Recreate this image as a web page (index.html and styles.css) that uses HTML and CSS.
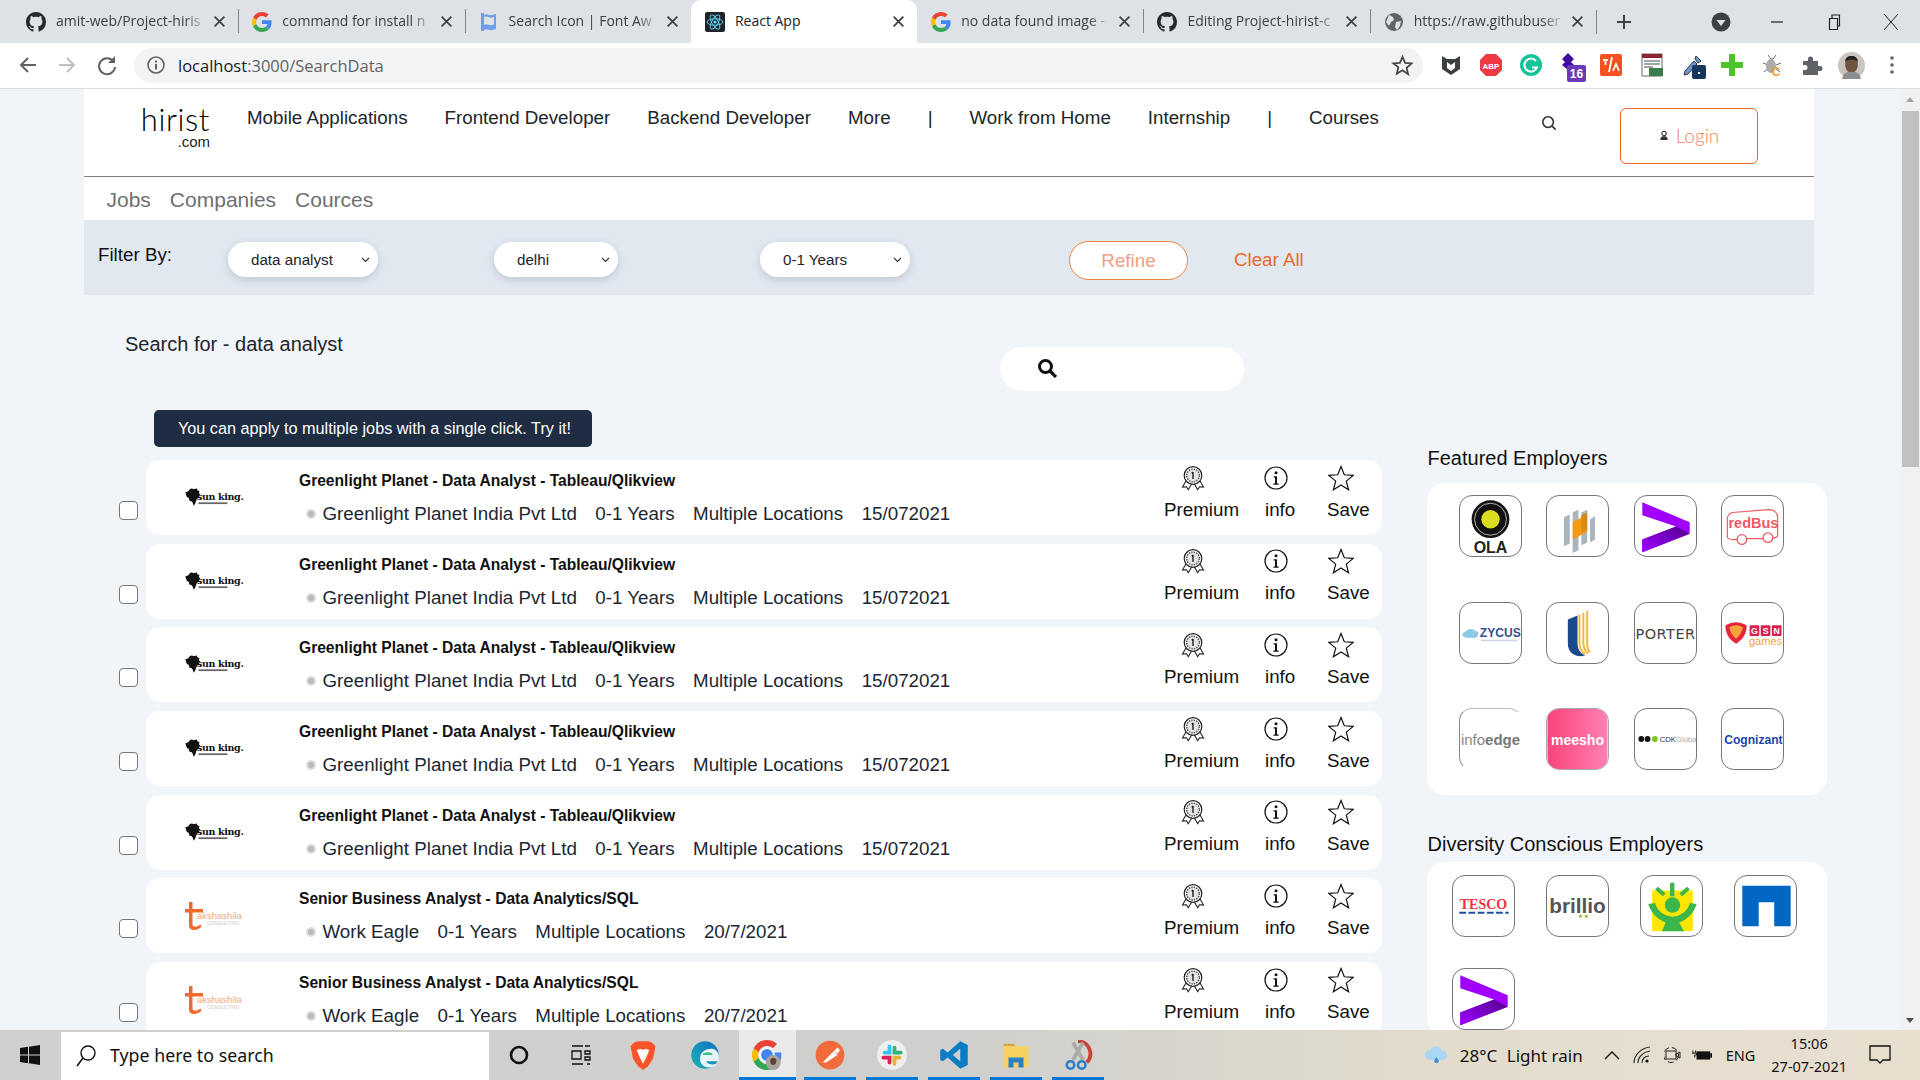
FILE: index.html
```html
<!DOCTYPE html>
<html lang="en">
<head>
<meta charset="utf-8">
<title>React App</title>
<link rel="stylesheet" href="styles.css">
</head>
<body>
<svg class="sprite" xmlns="http://www.w3.org/2000/svg">
  <defs><linearGradient id="accg" x1="0" x2="1" y1="1" y2="0"><stop offset="0" stop-color="#a100ff"/><stop offset="1" stop-color="#50008c"/></linearGradient></defs>
  <symbol id="gh" viewBox="0 0 16 16"><path fill="#24292e" d="M8 0C3.58 0 0 3.58 0 8c0 3.54 2.29 6.53 5.47 7.59.4.07.55-.17.55-.38 0-.19-.01-.82-.01-1.49-2.01.37-2.53-.49-2.69-.94-.09-.23-.48-.94-.82-1.13-.28-.15-.68-.52-.01-.53.63-.01 1.08.58 1.23.82.72 1.21 1.87.87 2.33.66.07-.52.28-.87.51-1.07-1.78-.2-3.64-.89-3.64-3.95 0-.87.31-1.59.82-2.15-.08-.2-.36-1.02.08-2.12 0 0 .67-.21 2.2.82.64-.18 1.32-.27 2-.27.68 0 1.36.09 2 .27 1.53-1.04 2.2-.82 2.2-.82.44 1.1.16 1.92.08 2.12.51.56.82 1.27.82 2.15 0 3.07-1.87 3.75-3.65 3.95.29.25.54.73.54 1.48 0 1.07-.01 1.93-.01 2.2 0 .21.15.46.55.38A8.013 8.013 0 0016 8c0-4.42-3.58-8-8-8z"/></symbol>
  <symbol id="goo" viewBox="0 0 48 48"><path fill="#EA4335" d="M24 9.5c3.54 0 6.71 1.22 9.21 3.6l6.85-6.85C35.9 2.38 30.47 0 24 0 14.62 0 6.51 5.38 2.56 13.22l7.98 6.19C12.43 13.72 17.74 9.5 24 9.5z"/><path fill="#4285F4" d="M46.98 24.55c0-1.57-.15-3.09-.38-4.55H24v9.02h12.94c-.58 2.96-2.26 5.48-4.78 7.18l7.73 6c4.51-4.18 7.09-10.36 7.09-17.65z"/><path fill="#FBBC05" d="M10.53 28.59c-.48-1.45-.76-2.99-.76-4.59s.27-3.14.76-4.59l-7.98-6.19C.92 16.46 0 20.12 0 24c0 3.88.92 7.54 2.56 10.78l7.97-6.19z"/><path fill="#34A853" d="M24 48c6.48 0 11.93-2.13 15.89-5.81l-7.73-6c-2.15 1.45-4.92 2.3-8.16 2.3-6.26 0-11.57-4.22-13.47-9.91l-7.98 6.19C6.51 42.62 14.62 48 24 48z"/></symbol>
  <symbol id="x" viewBox="0 0 12 12"><path d="M1.500 1.500l9 9M10.500 1.500l-9 9" stroke="#3c4043" stroke-width="1.600" fill="none"/></symbol>
  <symbol id="medal" viewBox="0 0 24 24"><path d="M5.500 14L1.500 21l4-.3 1.800 3 3.700-6.500M18.500 14l4 7-4-.3-1.800 3-3.700-6.500" fill="#fff" stroke="#222" stroke-width="1.100"/><circle cx="12" cy="9.500" r="8.800" fill="#fff" stroke="#222" stroke-width="1.200"/><circle cx="12" cy="9.500" r="6.400" fill="#e4e4e4" stroke="#555" stroke-width="1.500" stroke-dasharray="1.500 1"/><path d="M12 6v7M10.700 7.200L12 6" stroke="#111" stroke-width="1.300" fill="none"/></symbol>
  <symbol id="info" viewBox="0 0 24 24"><circle cx="12" cy="12" r="11" fill="none" stroke="#111" stroke-width="1.200"/><circle cx="12" cy="6.700" r="1.500" fill="#111"/><path d="M9.600 10.300h3.400v7.300h1.700v1.100H9.400v-1.100h1.600v-6.200H9.600z" fill="#111"/></symbol>
  <symbol id="star" viewBox="0 0 26 26"><path d="M13 1.500l3.300 8.300 8.900.6-6.900 5.700 2.300 8.700-7.600-4.800-7.600 4.800 2.300-8.700L.8 10.400l8.900-.6z" fill="#fff" stroke="#111" stroke-width="1.200"/></symbol>
  <symbol id="sun" viewBox="0 0 56 20"><path d="M7 0l2 1 3-1 1 2 2 1-.5 2 1.500 1.500-2 1.500.5 2-2 .5-1 2.500-1 3-1.500 2-1-3-1-1.500-2.500-1-.5-2.500-2-1L1 6.500 .5 4 3.500 3 5 1z" fill="#111"/><rect x="14" y="14.500" width="30" height="1.800" fill="#666"/></symbol>
  <symbol id="tak" viewBox="0 0 54 30"><path d="M4 0h3.500v7H18v3.500H7.500V22c0 3 3 4 8 .5l1 2C13 29 4 30 4 23V10.500H0V7h4z" fill="#f26a2a"/></symbol>
  <symbol id="acc" viewBox="0 0 62 62"><path d="M7 6.500L56 27v12L7 58V45l35-13.500L7 20z" fill="#a100ff"/><path d="M7 45l35-13.500L56 39 7 58z" fill="url(#accg)"/></symbol>
</svg>

<header class="strip">
  <div class="tab"><svg class="fav"><use href="#gh"/></svg><span class="tab-t">amit-web/Project-hiris</span><svg class="tab-x"><use href="#x"/></svg></div>
  <div class="tab sep"><svg class="fav"><use href="#goo"/></svg><span class="tab-t">command for install n</span><svg class="tab-x"><use href="#x"/></svg></div>
  <div class="tab sep"><svg class="fav" viewBox="0 0 20 20"><path d="M2 1h3v2c3-2 5 1 8 0l4-1v15l-4 1c-3 1-5-2-8 0v1H2zM5 5v8c3-2 5 1 8 0l2-.5V5l-2 .5c-3 1-5-2-8-.5z" fill="#6f9fe8"/></svg><span class="tab-t">Search Icon | Font Aw</span><svg class="tab-x"><use href="#x"/></svg></div>
  <div class="tab active"><svg class="fav" viewBox="0 0 20 20"><rect width="20" height="20" rx="2" fill="#20232a"/><g fill="none" stroke="#61dafb" stroke-width=".9"><ellipse cx="10" cy="10" rx="8" ry="3.200"/><ellipse cx="10" cy="10" rx="8" ry="3.200" transform="rotate(60 10 10)"/><ellipse cx="10" cy="10" rx="8" ry="3.200" transform="rotate(120 10 10)"/></g><circle cx="10" cy="10" r="1.600" fill="#61dafb"/></svg><span class="tab-t nofade">React App</span><svg class="tab-x"><use href="#x"/></svg></div>
  <div class="tab"><svg class="fav"><use href="#goo"/></svg><span class="tab-t">no data found image -</span><svg class="tab-x"><use href="#x"/></svg></div>
  <div class="tab sep"><svg class="fav"><use href="#gh"/></svg><span class="tab-t">Editing Project-hirist-c</span><svg class="tab-x"><use href="#x"/></svg></div>
  <div class="tab sep"><svg class="fav" viewBox="0 0 20 20"><circle cx="10" cy="10" r="9" fill="#5f6368"/><path d="M5 3l4 2 1 3-3 2-2 4-3-4zM12 10l5-1-1 5-3 4-2-3z" fill="#dee1e6"/></svg><span class="tab-t">https://raw.githubuser</span><svg class="tab-x"><use href="#x"/></svg></div>
  <div class="plus-sep"></div>
  <svg class="plus" viewBox="0 0 24 24"><path d="M12 5v14M5 12h14" stroke="#3c4043" stroke-width="2"/></svg>
  <svg class="prof" viewBox="0 0 24 24"><circle cx="12" cy="12" r="9.500" fill="#3c4043"/><path d="M7.500 10h9L12 16z" fill="#dee1e6"/></svg>
  <svg class="win win-min" viewBox="0 0 24 24"><path d="M6 12h12" stroke="#222" stroke-width="1.200"/></svg>
  <svg class="win" viewBox="0 0 24 24"><path d="M7.500 8.500h8v11h-8zM10 8.500V5h7.500v11h-2" fill="none" stroke="#222" stroke-width="1.200"/></svg>
  <svg class="win" viewBox="0 0 24 24"><path d="M5 4l14 16M19 4L5 20" stroke="#222" stroke-width="1"/></svg>
</header>

<nav class="toolbar">
  <svg class="tbtn" viewBox="0 0 24 24"><path d="M20 12H5M12 5l-7 7 7 7" fill="none" stroke="#5f6368" stroke-width="2"/></svg>
  <svg class="tbtn" viewBox="0 0 24 24"><path d="M4 12h15M12 5l7 7-7 7" fill="none" stroke="#bdc1c6" stroke-width="2"/></svg>
  <svg class="tbtn" viewBox="0 0 24 24"><path d="M18.500 8.500A8 8 0 1 0 20 14" fill="none" stroke="#5f6368" stroke-width="2"/><path d="M20 3v7h-7z" fill="#5f6368"/></svg>
  <div class="pill">
    <svg class="site" viewBox="0 0 20 20"><circle cx="10" cy="10" r="8" fill="none" stroke="#5f6368" stroke-width="1.600"/><path d="M9 9h2v5.500H9zM9 5.500h2v2H9z" fill="#5f6368"/></svg>
    <span class="url"><b>localhost</b>:3000/SearchData</span>
    <svg class="bm" viewBox="0 0 24 24"><path d="M12 3l2.700 6.300 6.800.6-5.200 4.500 1.600 6.700L12 17l-5.900 3.600 1.600-6.700L2.500 9.900l6.800-.6z" fill="none" stroke="#444" stroke-width="1.800"/></svg>
  </div>
  <div class="exts">
    <div class="ext"><svg viewBox="0 0 24 24"><path d="M3 3l5 3h8l5-3v13l-9 6-9-6z" fill="#3b3f42"/><path d="M8 9l4 3 4-3v6l-4 3-4-3z" fill="#fff"/></svg></div>
    <div class="ext"><svg viewBox="0 0 24 24"><path d="M7 1h10l6 6v10l-6 6H7l-6-6V7z" fill="#ee3a43"/><text x="12" y="15.500" class="abp">ABP</text></svg></div>
    <div class="ext"><svg viewBox="0 0 24 24"><circle cx="12" cy="12" r="11" fill="#15c39a"/><path d="M17 8a6.500 6.500 0 1 0 1 6.500h-5" fill="none" stroke="#fff" stroke-width="2"/></svg></div>
    <div class="ext"><svg viewBox="0 0 24 24"><path d="M9 0l6 6-3 3 3 3-6 5-6-5 3-3-3-3z" fill="#3f0a9e"/><rect x="8" y="12" width="19" height="17" rx="2" fill="#6b39b8"/><text x="17.500" y="25" class="badge">16</text></svg></div>
    <div class="ext"><svg viewBox="0 0 24 24"><rect x="1" y="1" width="22" height="22" rx="2" fill="#f4511e"/><path d="M4 7h5M6.500 7v5M13 4l-3 15M14 18l3-7 3 7" stroke="#fff" stroke-width="1.800" fill="none"/></svg></div>
    <div class="ext"><svg viewBox="0 0 24 24"><rect x="2" y="1" width="20" height="22" fill="#fff" stroke="#666"/><rect x="2" y="1" width="20" height="4" fill="#8a2432"/><path d="M4 8h16M4 11h16M4 14h9" stroke="#888" stroke-width="1.500"/><rect x="9" y="15" width="14" height="8" fill="#3b7d4f"/></svg></div>
    <div class="ext"><svg viewBox="0 0 24 24"><path d="M16 3l5 5-3 2-3-4zM14 8l3 3-9 10-4 1 1-4z" fill="#6a97d6" stroke="#333"/><rect x="12" y="12" width="14" height="14" rx="2" fill="#16365c"/><rect x="18" y="19" width="2" height="2" fill="#fff"/></svg></div>
    <div class="ext"><svg viewBox="0 0 24 24"><path d="M9 1h6v8h8v6h-8v8H9v-8H1V9h8z" fill="#4ec42c"/></svg></div>
    <div class="ext"><svg viewBox="0 0 24 24"><path d="M8 2l3 4h2l3-4M3 10l5 2M21 10l-5 2M4 19l4-3M20 19l-4-3" stroke="#666" fill="none"/><ellipse cx="11" cy="13" rx="5" ry="7" fill="#aaa"/><text x="16" y="23" class="bug">C</text></svg></div>
    <div class="ext"><svg viewBox="0 0 24 24"><path d="M3 8h5V6a2.500 2.500 0 0 1 5 0v2h5v5h2a2.500 2.500 0 0 1 0 5h-2v4H3v-5h2a2.500 2.500 0 0 0 0-5H3z" fill="#5f6368"/></svg></div>
    <div class="ext ava"><svg viewBox="0 0 26 26"><circle cx="13" cy="13" r="13" fill="#c9c4bd"/><path d="M7 9c0-7 12-7 12 0v5c-1 4-3 6-6 6s-5-2-6-6z" fill="#6f5140"/><path d="M7 9c0-7 12-7 12 0l-2-1c-3-1-6-1-8 0z" fill="#222"/><path d="M4 26c1-6 4-7 9-7s8 1 9 7z" fill="#8b8f93"/></svg></div>
    <div class="ext"><svg viewBox="0 0 24 24"><circle cx="12" cy="5" r="1.800" fill="#5f6368"/><circle cx="12" cy="12" r="1.800" fill="#5f6368"/><circle cx="12" cy="19" r="1.800" fill="#5f6368"/></svg></div>
  </div>
</nav>

<div class="viewport">
  <main class="page">
    <section class="head">
      <div class="logo"><span class="logo-main">hirist</span><span class="logo-sub">.com</span></div>
      <div class="menu">
        <a>Mobile Applications</a><a>Frontend Developer</a><a>Backend Developer</a><a>More</a><a>|</a><a>Work from Home</a><a>Internship</a><a>|</a><a>Courses</a>
      </div>
      <svg class="head-search" viewBox="0 0 18 18"><circle cx="8" cy="8" r="6" fill="none" stroke="#333" stroke-width="1.800"/><path d="M12.500 12.500l4 4" stroke="#333" stroke-width="1.800"/></svg>
      <button class="login"><svg viewBox="0 0 12 12"><circle cx="6" cy="3.500" r="2.600" fill="#fff" stroke="#333" stroke-width="1.300"/><path d="M1.500 11.500c.5-4 2-4.500 4.500-4.500s4 .5 4.500 4.500z" fill="#333"/></svg>Login</button>
    </section>
    <section class="subnav"><a>Jobs</a><a>Companies</a><a>Cources</a></section>
    <section class="filter">
      <span class="filter-l">Filter By:</span>
      <select class="sel sel-a"><option>data analyst</option></select>
      <select class="sel sel-b"><option>delhi</option></select>
      <select class="sel sel-c"><option>0-1 Years</option></select>
      <button class="refine">Refine</button>
      <a class="clear">Clear All</a>
    </section>
    <div class="body">
      <div class="left">
        <div class="searchline">
          <span class="search-for">Search for - data analyst</span>
          <div class="searchbox"><svg viewBox="0 0 20 20"><circle cx="8.500" cy="8.500" r="6" fill="none" stroke="#111" stroke-width="3"/><path d="M13 13l6 6" stroke="#111" stroke-width="3.200"/></svg></div>
        </div>
        <div class="hint">You can apply to multiple jobs with a single click. Try it!</div>

        <div class="item"><input type="checkbox" class="chk"><article class="job">
          <svg class="clogo" viewBox="0 0 54 19.300"><use href="#sun"/><text x="12" y="12" class="sun-name">sun king.</text></svg>
          <div class="jtext"><h3>Greenlight Planet - Data Analyst - Tableau/Qlikview</h3><p><i class="dot"></i><span>Greenlight Planet India Pvt Ltd</span><span>0-1 Years</span><span>Multiple Locations</span><span>15/072021</span></p></div>
          <div class="acts"><div class="act a1"><svg><use href="#medal"/></svg><span>Premium</span></div><div class="act a2"><svg><use href="#info"/></svg><span>info</span></div><div class="act a3"><svg><use href="#star"/></svg><span>Save</span></div></div>
        </article></div>
        <div class="item"><input type="checkbox" class="chk"><article class="job">
          <svg class="clogo" viewBox="0 0 54 19.300"><use href="#sun"/><text x="12" y="12" class="sun-name">sun king.</text></svg>
          <div class="jtext"><h3>Greenlight Planet - Data Analyst - Tableau/Qlikview</h3><p><i class="dot"></i><span>Greenlight Planet India Pvt Ltd</span><span>0-1 Years</span><span>Multiple Locations</span><span>15/072021</span></p></div>
          <div class="acts"><div class="act a1"><svg><use href="#medal"/></svg><span>Premium</span></div><div class="act a2"><svg><use href="#info"/></svg><span>info</span></div><div class="act a3"><svg><use href="#star"/></svg><span>Save</span></div></div>
        </article></div>
        <div class="item"><input type="checkbox" class="chk"><article class="job">
          <svg class="clogo" viewBox="0 0 54 19.300"><use href="#sun"/><text x="12" y="12" class="sun-name">sun king.</text></svg>
          <div class="jtext"><h3>Greenlight Planet - Data Analyst - Tableau/Qlikview</h3><p><i class="dot"></i><span>Greenlight Planet India Pvt Ltd</span><span>0-1 Years</span><span>Multiple Locations</span><span>15/072021</span></p></div>
          <div class="acts"><div class="act a1"><svg><use href="#medal"/></svg><span>Premium</span></div><div class="act a2"><svg><use href="#info"/></svg><span>info</span></div><div class="act a3"><svg><use href="#star"/></svg><span>Save</span></div></div>
        </article></div>
        <div class="item"><input type="checkbox" class="chk"><article class="job">
          <svg class="clogo" viewBox="0 0 54 19.300"><use href="#sun"/><text x="12" y="12" class="sun-name">sun king.</text></svg>
          <div class="jtext"><h3>Greenlight Planet - Data Analyst - Tableau/Qlikview</h3><p><i class="dot"></i><span>Greenlight Planet India Pvt Ltd</span><span>0-1 Years</span><span>Multiple Locations</span><span>15/072021</span></p></div>
          <div class="acts"><div class="act a1"><svg><use href="#medal"/></svg><span>Premium</span></div><div class="act a2"><svg><use href="#info"/></svg><span>info</span></div><div class="act a3"><svg><use href="#star"/></svg><span>Save</span></div></div>
        </article></div>
        <div class="item"><input type="checkbox" class="chk"><article class="job">
          <svg class="clogo" viewBox="0 0 54 19.300"><use href="#sun"/><text x="12" y="12" class="sun-name">sun king.</text></svg>
          <div class="jtext"><h3>Greenlight Planet - Data Analyst - Tableau/Qlikview</h3><p><i class="dot"></i><span>Greenlight Planet India Pvt Ltd</span><span>0-1 Years</span><span>Multiple Locations</span><span>15/072021</span></p></div>
          <div class="acts"><div class="act a1"><svg><use href="#medal"/></svg><span>Premium</span></div><div class="act a2"><svg><use href="#info"/></svg><span>info</span></div><div class="act a3"><svg><use href="#star"/></svg><span>Save</span></div></div>
        </article></div>
        <div class="item"><input type="checkbox" class="chk"><article class="job">
          <svg class="clogo tk" viewBox="0 0 54 30"><use href="#tak"/><text x="12" y="17" class="tak-name">akshashila</text><text x="22" y="23" class="tak-sub">CONSULTING</text></svg>
          <div class="jtext"><h3>Senior Business Analyst - Data Analytics/SQL</h3><p><i class="dot"></i><span>Work Eagle</span><span>0-1 Years</span><span>Multiple Locations</span><span>20/7/2021</span></p></div>
          <div class="acts"><div class="act a1"><svg><use href="#medal"/></svg><span>Premium</span></div><div class="act a2"><svg><use href="#info"/></svg><span>info</span></div><div class="act a3"><svg><use href="#star"/></svg><span>Save</span></div></div>
        </article></div>
        <div class="item"><input type="checkbox" class="chk"><article class="job">
          <svg class="clogo tk" viewBox="0 0 54 30"><use href="#tak"/><text x="12" y="17" class="tak-name">akshashila</text><text x="22" y="23" class="tak-sub">CONSULTING</text></svg>
          <div class="jtext"><h3>Senior Business Analyst - Data Analytics/SQL</h3><p><i class="dot"></i><span>Work Eagle</span><span>0-1 Years</span><span>Multiple Locations</span><span>20/7/2021</span></p></div>
          <div class="acts"><div class="act a1"><svg><use href="#medal"/></svg><span>Premium</span></div><div class="act a2"><svg><use href="#info"/></svg><span>info</span></div><div class="act a3"><svg><use href="#star"/></svg><span>Save</span></div></div>
        </article></div>
      </div>

      <aside class="right">
        <h2>Featured Employers</h2>
        <div class="card feat">
          <div class="emp"><svg viewBox="0 0 62 62"><circle cx="31" cy="24" r="19.500" fill="#111"/><circle cx="31" cy="24" r="16.500" fill="none" stroke="#fff" stroke-width=".7"/><circle cx="31" cy="24" r="9.500" fill="#d9dd1f"/><text x="31" y="58.500" class="t-ola">OLA</text></svg></div>
          <div class="emp"><svg viewBox="0 0 62 62"><path d="M17 22l6-3v30l-6 3zM26 17l6-3v42l-6 3zM35 17l6-3v34l-6 3zM44 24l5-3v24l-5 3z" fill="#aab4bb"/><path d="M26 27l15-8v18l-15 8z" fill="#f39a12"/><path d="M35 20l6-3v18l-6 3z" fill="#d98812"/></svg></div>
          <div class="emp"><svg><use href="#acc"/></svg></div>
          <div class="emp"><svg viewBox="0 0 62 62"><path d="M5 42V24c0-4 2-6 5-7l38-3c5 0 9 3 9 8v18c0 2-1 3-3 3l-8 1H21l-10 1c-4 0-6-1-6-3z" fill="#fff" stroke="#ef5a62" stroke-width="1.200"/><circle cx="20" cy="45" r="5" fill="#fff" stroke="#ef5a62" stroke-width="1.300"/><circle cx="47" cy="43" r="5" fill="#fff" stroke="#ef5a62" stroke-width="1.300"/><text x="32" y="33" class="t-red">redBus</text></svg></div>

          <div class="emp"><svg viewBox="0 0 62 62"><path d="M2 32c2-3 4-2 5-4 3-2 7-1 8 1 3 0 4 2 3 4 0 2-2 3-4 3H7c-3 0-5-2-5-4z" fill="#8cc9e6"/><text x="20" y="35" class="t-zy">ZYCUS</text><rect x="21" y="38" width="38" height="1.500" fill="#c8d3e6"/></svg></div>
          <div class="emp"><svg viewBox="0 0 62 62"><path d="M21 17l10-4v28c0 7 3 11 8 13-7 3-18-1-18-12z" fill="#1b4a8a"/><path d="M33 12v29c0 7 3 10 6 12M37 10v30c0 7 2 10 5 12M41 8v33c0 6 1 8 3 10" fill="none" stroke="#f2b83a" stroke-width="2"/></svg></div>
          <div class="emp"><svg viewBox="0 0 62 62"><text x="31" y="37" class="t-po">PORTER</text></svg></div>
          <div class="emp"><svg viewBox="0 0 62 62"><path d="M3 23c4-2 8-3 11-3s7 1 11 3c0 9-4 15-11 19C7 38 3 32 3 23z" fill="#e5263a"/><path d="M7 25c2-1 5-2 7-2s5 1 7 2c-1 6-4 9-7 12-3-3-6-6-7-12z" fill="#f8a23c"/><rect x="28" y="23" width="10" height="11" rx="1" fill="#d91f4f"/><rect x="39.500" y="23" width="10" height="11" rx="1" fill="#d91f4f"/><rect x="51" y="23" width="10" height="11" rx="1" fill="#d91f4f"/><text x="33" y="32" class="t-gs">G</text><text x="44.500" y="32" class="t-gs">S</text><text x="56" y="32" class="t-gs">N</text><text x="44.500" y="43" class="t-gm">games</text></svg></div>

          <div class="emp soft"><svg viewBox="0 0 62 62"><text x="31" y="37" class="t-in">info<tspan class="t-in-b">edge</tspan></text></svg></div>
          <div class="emp pink"><svg viewBox="0 0 62 62"><defs><linearGradient id="ms"><stop offset="0" stop-color="#f9447b"/><stop offset="1" stop-color="#ff80b5"/></linearGradient></defs><rect width="62" height="62" fill="url(#ms)"/><text x="31" y="37" class="t-me">meesho</text></svg></div>
          <div class="emp"><svg viewBox="0 0 62 62"><circle cx="6" cy="31" r="3" fill="#111"/><circle cx="12.500" cy="31" r="3" fill="#111"/><circle cx="20" cy="31" r="3" fill="#7ec41f"/><text x="25" y="34" class="t-cd">CDK<tspan fill="#aaa">Global</tspan></text></svg></div>
          <div class="emp"><svg viewBox="0 0 62 62"><text x="32" y="36" class="t-co">Cognizant</text></svg></div>
        </div>
        <h2 class="h-div">Diversity Conscious Employers</h2>
        <div class="card div">
          <div class="emp"><svg viewBox="0 0 62 62"><text x="31" y="34" class="t-te">TESCO</text><path d="M6 38h51" stroke="#1c4fa0" stroke-width="2" stroke-dasharray="7 2.500"/></svg></div>
          <div class="emp"><svg viewBox="0 0 62 62"><text x="31" y="38" class="t-br">brillio</text><circle cx="34" cy="41.500" r="1.700" fill="#9bc53d"/><circle cx="40" cy="41.500" r="1.700" fill="#9bc53d"/></svg></div>
          <div class="emp"><svg viewBox="0 0 62 62"><rect x="11" y="15" width="42" height="42" fill="#ffe600"/><g fill="#3cb54a"><circle cx="32" cy="30" r="8"/><rect x="29.500" y="7" width="4.500" height="14"/><path d="M14 14l3-3 8 7-3 3zM50 14l-3-3-8 7 3 3z"/><path d="M7 29l7-1c2 8 10 14 18 14s16-6 18-14l7 1c-3 10-11 17-18 19l5 9H21l4-9C18 46 10 39 7 29z"/></g></svg></div>
          <div class="emp"><svg viewBox="0 0 62 62"><path d="M7 10h50v42H40V27H24v25H7z" fill="#0067c5"/></svg></div>
          <div class="emp"><svg><use href="#acc"/></svg></div>
        </div>
      </aside>
    </div>
  </main>
  <div class="scroll"><i class="up"></i><div class="thumb"></div><i class="down"></i></div>
</div>

<footer class="task">
  <svg class="start" viewBox="0 0 20 20"><path d="M0 3l8-1.200V9.500H0zM9 1.700L20 0v9.500H9zM0 10.500h8v7.700L0 17zM9 10.500h11V20L9 18.300z" fill="#111"/></svg>
  <div class="tsearch"><svg viewBox="0 0 24 24"><circle cx="14" cy="9" r="7" fill="none" stroke="#111" stroke-width="1.400"/><path d="M9 14l-6 8" stroke="#111" stroke-width="1.600"/></svg><span>Type here to search</span></div>
  <div class="apps">
    <div class="app plain"><svg viewBox="0 0 24 24"><circle cx="12" cy="12" r="8" fill="none" stroke="#111" stroke-width="2.600"/></svg></div>
    <div class="app plain"><svg viewBox="0 0 24 24"><path d="M3 3h11M3 21h11M3 8h9v8H3zM16 3h5M16 8h5v3h-5zM16 14h5v3h-5zM18 21h3" fill="none" stroke="#111" stroke-width="1.300"/></svg></div>
    <div class="app plain"><svg viewBox="0 0 24 24"><path d="M5 2l3-1h8l3 1 3 3-2 10-4 6-4 3-4-3-4-6L2 5z" fill="#fb542b"/><path d="M7 8l3-1 2 1 2-1 3 1-2 5-3 6-3-6z" fill="#fff"/></svg></div>
    <div class="app plain"><svg viewBox="0 0 24 24"><defs><linearGradient id="ed" x1="0" x2="1" y1="1" y2="0"><stop offset="0" stop-color="#1fb4b2"/><stop offset="1" stop-color="#0c6fc4"/></linearGradient></defs><circle cx="12" cy="12" r="11" fill="url(#ed)"/><path d="M23 13c0-4-3-6-6-6-5 0-9 3-9 8 0 4 3 7 7 7 3 0 5-1 7-3-3 1-8 1-9-2h10z" fill="#e7f4fb"/><path d="M10 12c1-3 8-3 8 0z" fill="#3cc07e"/></svg></div>
    <div class="app on"><svg viewBox="0 0 48 48"><use href="#goo"/><circle cx="24" cy="24" r="11" fill="#4285f4" stroke="#fff" stroke-width="3"/><circle cx="34" cy="36" r="12" fill="#a8a39c"/><path d="M29 33c0-6 10-6 10 0 0 4-2 7-5 7s-5-3-5-7z" fill="#5c4436"/></svg></div>
    <div class="app"><svg viewBox="0 0 24 24"><circle cx="12" cy="12" r="11.500" fill="#f26b3a"/><path d="M6 18l9-9 3 3-9 6zM15 9l3-3 2 2-2 3z" fill="#fff"/></svg></div>
    <div class="app"><svg viewBox="0 0 24 24"><circle cx="12" cy="12" r="12" fill="#eee"/><g stroke-width="3" stroke-linecap="round"><path d="M10 5v5H6" stroke="#36c5f0" fill="none"/><path d="M19 10h-5V6" stroke="#2eb67d" fill="none"/><path d="M14 19v-5h4" stroke="#ecb22e" fill="none"/><path d="M5 14h5v4" stroke="#e01e5a" fill="none"/></g></svg></div>
    <div class="app"><svg viewBox="0 0 24 24"><path d="M17 1l6 3v16l-6 3L7 14l-4 3-2-1V8l2-1 4 3zM17 7l-6 5 6 5z" fill="#0a7cc4"/></svg></div>
    <div class="app"><svg viewBox="0 0 24 24"><path d="M2 3h8l2 2H2z" fill="#e0a43b"/><rect x="2" y="5" width="20" height="17" fill="#f7d261"/><path d="M6 14h12v8h-4v-4h-4v4H6z" fill="#2b7fc4"/></svg></div>
    <div class="app"><svg viewBox="0 0 24 24"><path d="M12 1a10 10 0 0 1 7 17" fill="none" stroke="#c9423a" stroke-width="3"/><path d="M8 2l8 14M16 2L8 16" stroke="#aaa" stroke-width="3"/><circle cx="6" cy="20" r="3" fill="none" stroke="#2a7fc9" stroke-width="2"/><circle cx="15" cy="20" r="3" fill="none" stroke="#2a7fc9" stroke-width="2"/></svg></div>
  </div>
  <div class="tray">
    <svg class="cloud" viewBox="0 0 26 20"><path d="M6 15a5 5 0 0 1 0-10 7 7 0 0 1 13 1 4.500 4.500 0 0 1 1 9z" fill="#a9d6f5"/><path d="M13 12l2.500 4a2.500 2.500 0 1 1-5 0z" fill="#3d8ed6"/></svg>
    <span class="temp">28°C</span><span class="rain">Light rain</span>
    <svg class="caret" viewBox="0 0 16 10"><path d="M1 9l7-7 7 7" fill="none" stroke="#111" stroke-width="1.300"/></svg>
    <svg class="ticon" viewBox="0 0 18 18"><path d="M1 17C1 9 8 2 17 1M5 17c0-6 5-11 12-12M9 17c0-4 3-7 7-7" fill="none" stroke="#222" stroke-width="1.100"/><circle cx="14" cy="15" r="1.600" fill="#111"/></svg>
    <svg class="ticon" viewBox="0 0 18 18"><circle cx="7" cy="9" r="7.500" fill="none" stroke="#222" stroke-width="1" stroke-dasharray="6 3"/><rect x="2" y="5" width="10" height="8" fill="#e7dfd0" stroke="#222"/><path d="M12 8l4-2v6l-4-2z" fill="none" stroke="#222"/></svg>
    <svg class="batt" viewBox="0 0 22 14"><path d="M1 2v3M4 2v3M0 5h5v2H3v3" stroke="#111" fill="none"/><rect x="5" y="3" width="15" height="9" fill="#111"/><rect x="20" y="5" width="2" height="5" fill="#111"/></svg>
    <span class="eng">ENG</span>
    <div class="clock"><span>15:06</span><span>27-07-2021</span></div>
    <svg class="notif" viewBox="0 0 22 20"><path d="M1 1h20v14h-7l-3 3-3-3H1z" fill="none" stroke="#111" stroke-width="1.300"/></svg>
  </div>
</footer>
</body>
</html>
```
FILE: styles.css
```css
*{box-sizing:border-box}
html,body{margin:0;height:100%}
body{width:1920px;height:1080px;overflow:hidden;display:flex;flex-direction:column;font-family:"Liberation Sans",Arial,sans-serif;color:#212529;background:#f1f4f9}
.sprite{position:absolute;width:0;height:0}
h2,h3,p{margin:0;font-weight:400}

/* browser chrome */
.strip{height:43px;flex:none;background:#dee1e6;display:flex;align-items:center;padding-left:12px;font-family:"Open Sans","Noto Sans",sans-serif}
.tab{width:226.3px;height:43px;flex:none;display:flex;align-items:center;padding:0 6px 0 14px;position:relative;border-radius:10px 10px 0 0;color:#3c4043}
.tab.sep::before{content:"";position:absolute;left:0;top:9px;height:24px;width:1px;background:#80868b}
.tab.active{background:#fff;color:#202124}
.fav{width:20px;height:20px;flex:none}
.tab-t{flex:1;margin:-2px 0 0 10px;font-size:14px;white-space:nowrap;min-width:0;-webkit-mask-image:linear-gradient(90deg,#000 85%,transparent);mask-image:linear-gradient(90deg,#000 85%,transparent)}
.tab-t.nofade{-webkit-mask-image:none;mask-image:none}
.tab-x{width:13px;height:13px;flex:none;margin:0 6px}
.plus-sep{width:1px;height:24px;background:#80868b;flex:none}
.plus{width:24px;height:24px;margin-left:15px;flex:none}
.prof{width:24px;height:24px;margin-left:73px;flex:none}
.win{width:24px;height:24px;flex:none;margin-left:33px}
.win-min{margin-left:32px}
.toolbar{height:46px;flex:none;background:#fff;border-bottom:1px solid #dadce0;display:flex;align-items:center;padding-left:8px;padding-bottom:1px}
.tbtn{width:24px;height:24px;flex:none;margin:0 8px}
.tbtn:nth-child(2){margin-left:7px}
.pill{width:1289px;margin-left:7px;height:35px;background:#f1f3f4;border-radius:18px;display:flex;align-items:center;padding:0 12px;flex:none}
.site{width:20px;height:20px;flex:none}
.url{margin-left:12px;font-family:"Open Sans","Noto Sans",sans-serif;font-size:16.5px;color:#5f6368;flex:1}
.url b{font-weight:400;color:#202124}
.bm{width:23px;height:23px;flex:none;margin-right:-3px}
.exts{display:flex;margin-left:8px}
.ext{width:40.1px;display:flex;justify-content:center;align-items:center;flex:none}
.ext svg{width:24px;height:24px;overflow:visible}
.ext.ava svg{width:27px;height:27px}
.abp{font:700 8px "Liberation Sans",sans-serif;fill:#fff;text-anchor:middle}
.badge{font:700 12px "Liberation Sans",sans-serif;fill:#fff;text-anchor:middle}
.bug{font:700 12px "Liberation Sans",sans-serif;fill:#f0a030;text-anchor:middle}

/* page */
.viewport{flex:1;min-height:0;display:flex;overflow:hidden}
.page{width:1900px;flex:none;padding-left:84px;overflow:hidden}
.head{width:1730px;height:88px;background:#fff;border-bottom:1px solid #808080;display:flex;align-items:flex-start;padding-left:56px}
.logo{width:70px;margin-top:16px;display:flex;flex-direction:column;align-items:flex-end;color:#000;flex:none}
.logo-main{font:300 31px/29px Lato,"Liberation Sans",sans-serif;letter-spacing:.6px}
.logo-sub{font-size:15px;line-height:15px;color:#222}
.menu{display:flex;gap:37px;margin-left:37px;margin-top:16px;font-size:18.75px;line-height:26px;color:#212529}
.head-search{width:16px;height:16px;margin-left:auto;margin-top:26px;flex:none}
.login{width:138px;height:56px;margin:19px 56px 0 63px;border:1px solid #e8661d;border-radius:6px;background:#fff;color:#f4815a;font:300 19px "Lato","Liberation Sans",sans-serif;display:flex;align-items:center;justify-content:center;gap:7px;padding:0 0 2px}
.login svg{width:10px;height:11px}
.subnav{width:1730px;height:43px;background:#fff;display:flex;align-items:center;gap:19px;padding:2px 0 0 22.5px;font-size:21px;color:#6f6f6f}
.filter{width:1730px;height:75px;background:#e2e8f0;display:flex;align-items:center;padding-left:14px}
.filter-l{font-size:18.75px;color:#111;margin-top:-6px}
.sel{height:35px;border:0;border-radius:18px;appearance:none;background:#fff url("data:image/svg+xml,%3Csvg xmlns='http://www.w3.org/2000/svg' width='9' height='6'%3E%3Cpath d='M1 1l3.500 3.500L8 1' fill='none' stroke='%23333' stroke-width='1.100'/%3E%3C/svg%3E") no-repeat right 8px center;font:15.2px "Liberation Sans",sans-serif;color:#212529;box-shadow:0 3px 8px rgba(40,60,90,.18);padding:0 5px 0 23px;flex:none;margin-top:4px}
.sel-a{width:150px;margin-left:56px}
.sel-b{width:124px;margin-left:116px}
.sel-c{width:150px;margin-left:142px}
.refine{width:119px;height:39px;margin:6px 0 0 159px;border:1px solid #f08040;border-radius:20px;background:#fff;color:#f0a080;font:18.75px "Liberation Sans",sans-serif}
.clear{margin:5px 0 0 46px;color:#ea6a2a;font-size:18.75px}
.body{display:flex;align-items:flex-start;width:1760px}
.left{width:1298px;flex:none}
.searchline{height:115px;display:flex;align-items:flex-start;padding:36px 0 0 41px}
.search-for{font-size:20px;line-height:26px;color:#212529}
.searchbox{width:244px;height:44px;margin:16px 0 0 657.5px;background:#fff;border-radius:22px;padding:11px 0 0 37px}
.searchbox svg{width:20px;height:20px;display:block}
.hint{width:438px;height:37px;margin-left:70px;margin-bottom:13px;background:#1e2d42;color:#fff;border-radius:5px;font-size:16.25px;display:flex;align-items:center;justify-content:center;padding-left:3px}
.item{display:flex;height:75px;margin-bottom:8.7px}
.chk{width:19px;height:19px;margin:41px 8px 0 35px;flex:none;appearance:none;border:1.500px solid #767676;border-radius:4px;background:#fff}
.job{width:1236px;background:#fff;border-radius:14px;display:flex}
.clogo{width:54px;height:20px;margin:28px 0 0 39px;flex:none;overflow:visible}
.clogo.tk{height:30px;margin-top:24px}
.sun-name{font:700 9.500px "DejaVu Serif",serif;fill:#111;letter-spacing:-.35px}
.tak-name{font:300 9.500px "Liberation Sans",sans-serif;fill:#f5a97a}
.tak-sub{font:5px "Liberation Sans",sans-serif;fill:#c9c9c9}
.jtext{margin-left:60px;padding-top:9px;flex:1;min-width:0}
.jtext h3{font-size:15.6px;font-weight:700;line-height:24px;color:#111}
.jtext p{display:flex;align-items:center;gap:18.5px;margin-top:8px;margin-left:7px;font-size:18.75px;line-height:26px;color:#1c2733}
.dot{width:10px;height:10px;border-radius:50%;background:#b9b9b9;border:2px solid #dcdcdc;flex:none;margin-right:-12px}
.acts{display:flex;width:218px;flex:none;padding:4.600px 0 0}
.act{display:flex;flex-direction:column;font-size:18.75px;line-height:26px;color:#111}
.act svg{height:26px;display:block;margin-bottom:6px}
.a1{width:101px}
.a1 svg{width:24px;margin-left:17px}
.a2{width:62px}
.a2 svg{width:24px;margin-left:-1px}
.a3 svg{width:26px;margin-left:1px}
.right{width:400px;margin-left:45px;flex:none;padding-top:151px}
.right h2{font-size:20px;line-height:24px;color:#111;padding-left:.5px}
.card{width:400px;background:#fff;border-radius:18px}
.feat{margin-top:13px;height:312px;display:grid;grid-template-columns:repeat(4,63px);column-gap:24.3px;row-gap:44.5px;padding:12px 0 0 32px;align-content:start}
.right .h-div{margin-top:37px}
.div{margin-top:6px;height:174px;display:grid;grid-template-columns:repeat(4,63px);column-gap:31px;row-gap:31px;padding:13px 0 0 25px;align-content:start}
.emp{width:63px;height:62px;border:1px solid #777;border-radius:13px;overflow:hidden;background:#fff}
.emp svg{width:100%;height:100%;display:block}
.emp.soft{border-color:#bbb #fff #fff #888}
.emp.pink{border-color:#aaa}
.t-ola{font:700 16.500px "Liberation Sans",sans-serif;fill:#222;text-anchor:middle}
.t-red{font:700 15px "Liberation Sans",sans-serif;fill:#ef5a62;text-anchor:middle}
.t-zy{font:700 12.500px "Liberation Sans",sans-serif;fill:#33528f}
.t-po{font:400 15px "DejaVu Sans",sans-serif;fill:#444;text-anchor:middle;letter-spacing:.5px}
.t-gs{font:700 9px "Liberation Sans",sans-serif;fill:#fff;text-anchor:middle}
.t-gm{font:400 11.500px "Liberation Sans",sans-serif;fill:#f6a33f;text-anchor:middle}
.t-in{font:400 15.500px "Liberation Sans",sans-serif;fill:#888;text-anchor:middle}
.t-in-b{font-weight:700;fill:#777}
.t-me{font:700 14.500px "Liberation Sans",sans-serif;fill:#fff;text-anchor:middle}
.t-cd{font:400 8px "Liberation Sans",sans-serif;fill:#333}
.t-co{font:700 12.500px "Liberation Sans",sans-serif;fill:#2046a8;text-anchor:middle}
.t-te{font:700 14.500px "Liberation Serif",serif;fill:#ee3340;text-anchor:middle}
.t-br{font:700 21.500px "Liberation Sans",sans-serif;fill:#555;text-anchor:middle}
.scroll{width:20px;flex:none;background:#f1f1f1;display:flex;flex-direction:column;align-items:center;padding:0 1px}
.thumb{width:17px;height:356px;background:#c1c1c1;margin-top:9px}
.up{width:0;height:0;border:4.500px solid transparent;border-bottom:5px solid #a3a3a3;border-top:0;margin-top:8px}
.down{width:0;height:0;border:4.500px solid transparent;border-top:5px solid #505050;border-bottom:0;margin-top:auto;margin-bottom:7px}

/* taskbar */
.task{height:50px;flex:none;display:flex;align-items:center;background:linear-gradient(90deg,#d0d0d0,#cfcfcd 50%,#e3dccd 75%,#e8dfcf);font-family:"Noto Sans","Open Sans",sans-serif;color:#111}
.start{width:20px;height:20px;margin-left:20px;flex:none}
.tsearch{width:428px;height:48px;margin-left:21px;background:#fff;display:flex;align-items:center;padding-left:13px;font-size:17.8px;flex:none;margin-top:1px}
.tsearch svg{width:24px;height:24px;flex:none}
.tsearch span{margin:-2px 0 0 12px}
.apps{display:flex;height:50px;flex:none;margin-left:-1.5px}
.app{width:52px;margin:0 5.100px;display:flex;align-items:center;justify-content:center;border-bottom:3px solid #0078d7;padding-top:3px}
.app svg{width:30px;height:30px}
.app.plain{border-bottom-color:transparent}
.app:first-child svg,.app:nth-child(2) svg{width:24px;height:24px}
.app.on{width:57px;margin:0 2.600px;background:rgba(255,255,255,.55)}
.tray{margin-left:auto;display:flex;align-items:center;gap:13px;padding-right:29px;font-size:17px}
.cloud{width:25px;height:20px;margin-right:-2.500px}
.rain{margin-left:-3.500px}
.caret{width:16px;height:10px;margin-left:8px}
.ticon{width:18px;height:18px}
.batt{width:20px;height:14px;margin-left:-3px}
.eng{font-size:14.500px;margin-left:1px}
.clock{display:flex;flex-direction:column;align-items:center;font-size:14.500px;line-height:23px;margin-left:3px}
.notif{width:22px;height:20px;margin-left:9px}
```
